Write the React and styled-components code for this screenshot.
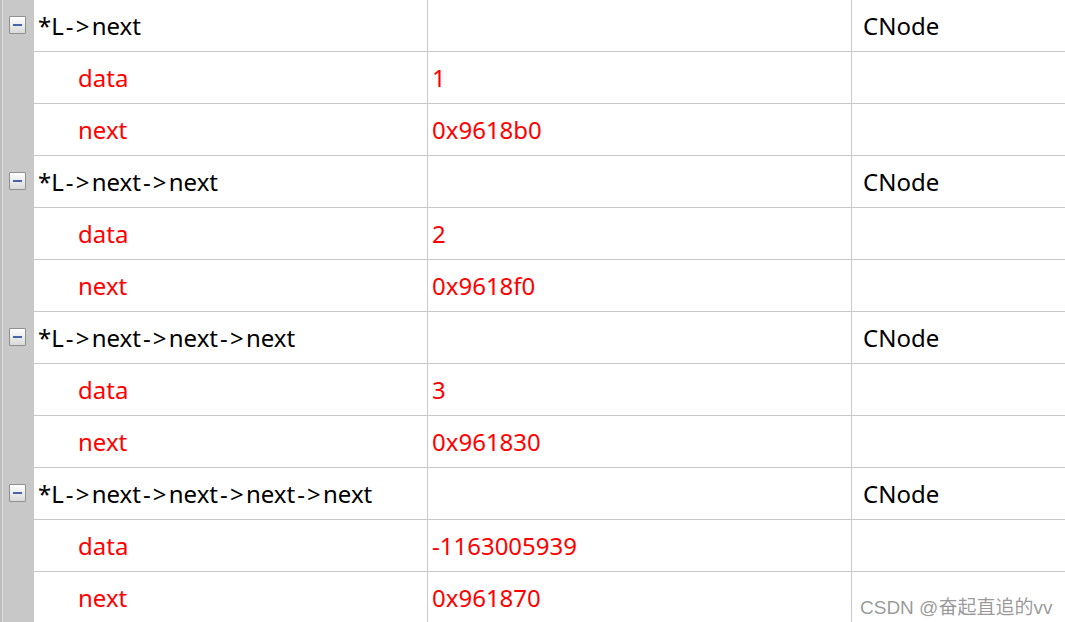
import React from 'react';
import styled, { createGlobalStyle } from 'styled-components';

const GlobalStyle = createGlobalStyle`
  html, body {
    margin: 0;
    padding: 0;
    background: #ffffff;
    overflow: hidden;
  }
`;

const rows = [
  { name: '*L->next', type: 'CNode', parent: true },
  { name: 'data', value: '1' },
  { name: 'next', value: '0x9618b0' },
  { name: '*L->next->next', type: 'CNode', parent: true },
  { name: 'data', value: '2' },
  { name: 'next', value: '0x9618f0' },
  { name: '*L->next->next->next', type: 'CNode', parent: true },
  { name: 'data', value: '3' },
  { name: 'next', value: '0x961830' },
  { name: '*L->next->next->next->next', type: 'CNode', parent: true },
  { name: 'data', value: '-1163005939' },
  { name: 'next', value: '0x961870' },
];

// the debugger font draws "->" wider, so give the arrows some room
const renderName = name =>
  name.split('->').map((part, i) => (
    <React.Fragment key={i}>
      {i > 0 && <Arrow>-&gt;</Arrow>}
      {part}
    </React.Fragment>
  ));

const App = () => (
  <Page>
    <GlobalStyle />
    <Table>
      {rows.map((row, i) => (
        <Row key={i}>
          <Gutter>{row.parent && <Expander />}</Gutter>
          <NameCell $child={!row.parent}>{renderName(row.name)}</NameCell>
          <ValueCell>{row.value}</ValueCell>
          <TypeCell>{row.type}</TypeCell>
        </Row>
      ))}
    </Table>
    <Watermark>CSDN @奋起直追的vv</Watermark>
  </Page>
);

export default App;

const Page = styled.div`
  position: relative;
  width: 1065px;
  height: 622px;
  overflow: hidden;
  font-family: 'Noto Sans', 'Open Sans', sans-serif;
  font-size: 24px;
`;

const Table = styled.div`
  display: flex;
  flex-direction: column;
`;

const Row = styled.div`
  display: grid;
  grid-template-columns: 34px 393px 424px 1fr;
  height: 52px;
`;

const Gutter = styled.div`
  background: #c8c8c8;
  box-shadow: inset 2px 0 0 #bdbdbd, inset 3px 0 0 #dcdcdc;
  position: relative;
`;

const Expander = styled.div`
  position: absolute;
  left: 9px;
  top: 16px;
  width: 15px;
  height: 16px;
  border: 1px solid #8e8f8f;
  background: linear-gradient(#ffffff, #d9d9d9);
  border-radius: 1px;

  &::after {
    content: '';
    position: absolute;
    left: 3px;
    right: 3px;
    top: 7px;
    height: 2px;
    background: #4863ac;
  }
`;

const Cell = styled.div`
  display: flex;
  align-items: center;
  border-bottom: 1px solid #c8c8c8;
  white-space: pre;
  overflow: hidden;
  line-height: 1;
  padding-top: 1px;
`;

const Arrow = styled.span`
  margin-left: 2px;
  letter-spacing: 2.2px;
`;

const NameCell = styled(Cell)`
  padding-left: ${props => (props.$child ? '44px' : '4px')};
  color: ${props => (props.$child ? '#ff0000' : '#000000')};
`;

const ValueCell = styled(Cell)`
  border-left: 1px solid #c8c8c8;
  padding-left: 4px;
  color: #ff0000;
`;

const TypeCell = styled(Cell)`
  border-left: 1px solid #c8c8c8;
  padding-left: 11px;
  color: #000000;
`;

const Watermark = styled.div`
  position: absolute;
  left: 860px;
  top: 592px;
  font-family: 'Liberation Sans', 'Noto Sans CJK SC', sans-serif;
  font-size: 19px;
  color: rgba(120, 120, 120, 0.75);
  white-space: nowrap;
`;
